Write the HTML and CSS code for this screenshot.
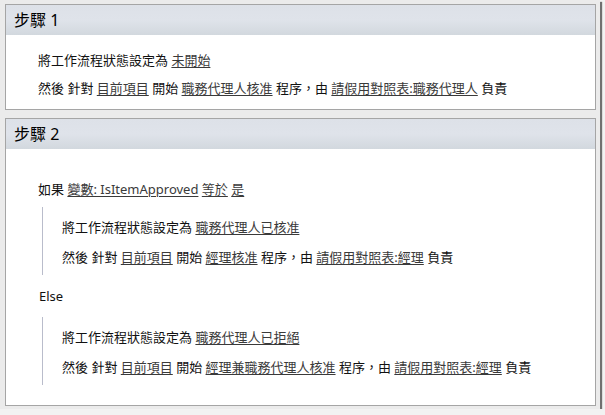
FILE: index.html
```html
<!DOCTYPE html>
<html lang="zh-Hant">
<head>
<meta charset="UTF-8">
<title>工作流程步驟</title>
<link rel="stylesheet" href="styles.css">
</head>
<body>

<div class="frame">

  <div class="step">
    <div class="step-title">步驟 1</div>
    <div class="step-body step-body-first">
      <div class="row">將工作流程狀態設定為 <a href="#">未開始</a></div>
      <div class="row">然後 針對 <a href="#">目前項目</a> 開始 <a href="#">職務代理人核准</a> 程序，由 <a href="#">請假用對照表:職務代理人</a> 負責</div>
    </div>
  </div>

  <div class="step">
    <div class="step-title">步驟 2</div>
    <div class="step-body">
      <div class="row cond">如果 <a href="#">變數: IsItemApproved</a> <a href="#">等於</a> <a href="#">是</a></div>
      <div class="branch">
        <div class="row">將工作流程狀態設定為 <a href="#">職務代理人已核准</a></div>
        <div class="row">然後 針對 <a href="#">目前項目</a> 開始 <a href="#">經理核准</a> 程序，由 <a href="#">請假用對照表:經理</a> 負責</div>
      </div>
      <div class="row cond else">Else</div>
      <div class="branch">
        <div class="row">將工作流程狀態設定為 <a href="#">職務代理人已拒絕</a></div>
        <div class="row">然後 針對 <a href="#">目前項目</a> 開始 <a href="#">經理兼職務代理人核准</a> 程序，由 <a href="#">請假用對照表:經理</a> 負責</div>
      </div>
    </div>
  </div>

</div>

</body>
</html>
```

FILE: styles.css
```css
body {
  margin: 0;
  background: #f2f2f2;
  font-family: "Noto Sans", "Noto Sans CJK TC", sans-serif;
  font-size: 13px;
  color: #111;
}
.frame {
  width: 600px;
  height: 409px;
  padding-top: 4px;
  box-sizing: border-box;
  background: #ebebeb;
  box-shadow: 2px 2px 1px #707070;
}
.step {
  width: 591px;
  margin-left: 5px;
  margin-bottom: 8px;
  box-sizing: border-box;
  border: 1px solid #a5a5a5;
  background: #fff;
}
.step-title {
  height: 30px;
  line-height: 30px;
  padding-left: 8px;
  font-size: 16px;
  color: #000;
  background: linear-gradient(#dde1e8, #dfe3ea 50%, #d2d8de);
}
.step-body {
  padding: 26px 0 20px 32px;
}
.step-body-first {
  padding: 11px 0 7px 32px;
}
.row {
  height: 28px;
  line-height: 28px;
  white-space: nowrap;
}
.row a {
  color: #3a3a3a;
  text-decoration: underline;
  text-underline-offset: 2px;
}
.branch {
  margin: 4px 0 0 4px;
  padding: 5px 0 3px 19px;
  border-left: 1px solid #b9bccb;
}
.branch .row {
  height: 30px;
  line-height: 30px;
}
.else {
  margin: 7px 0 7px 1px;
}
```
